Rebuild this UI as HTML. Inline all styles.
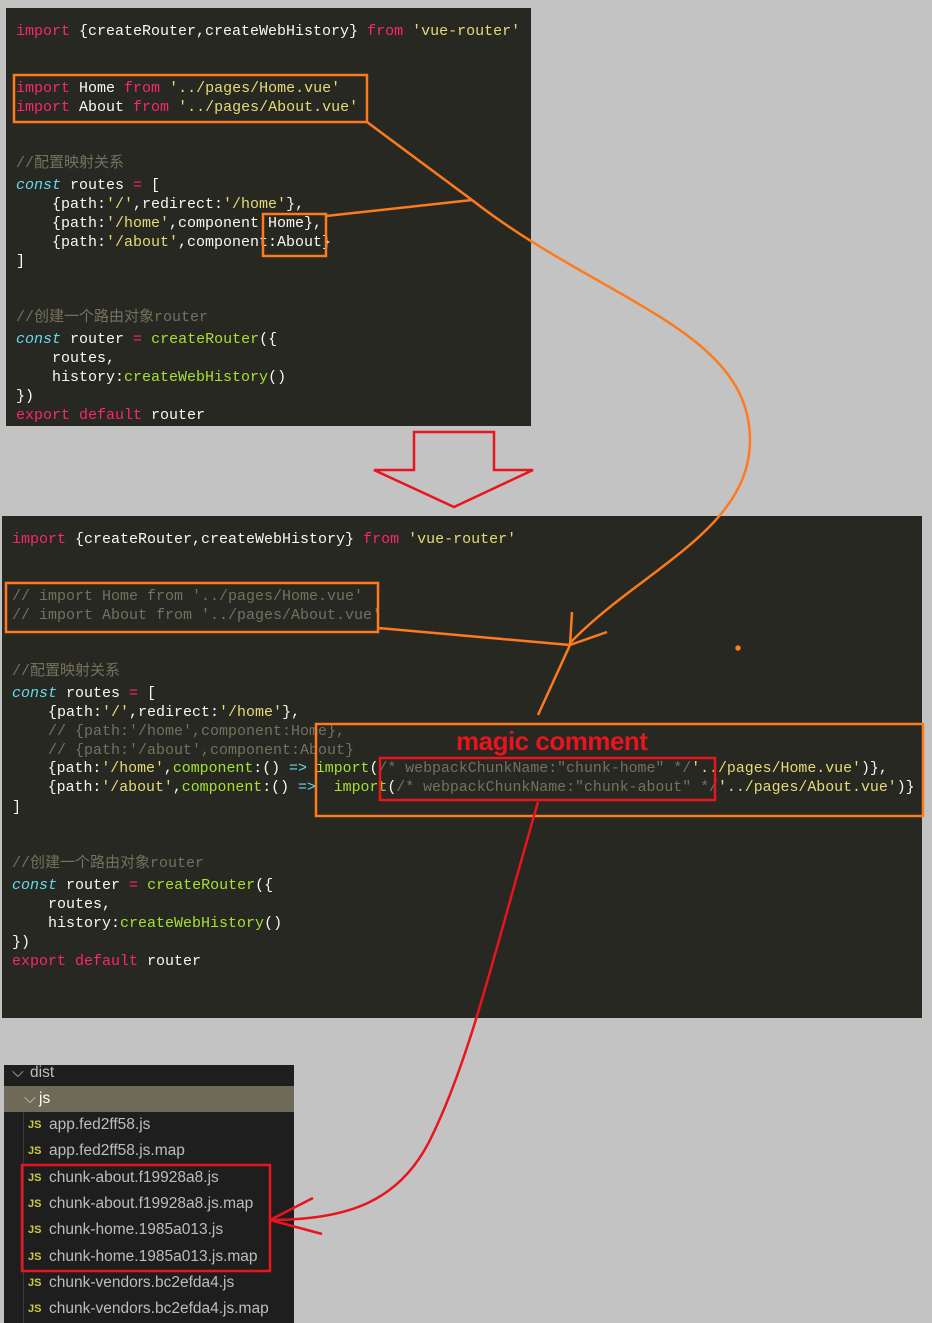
<!DOCTYPE html>
<html><head><meta charset="utf-8"><style>
body{margin:0;width:932px;height:1323px;background:#c3c3c3;position:relative;overflow:hidden;font-family:"Liberation Mono","Noto Sans CJK SC",monospace;}
.p{position:absolute;background:#272822;}
.l{position:absolute;white-space:pre;font-size:15px;line-height:19px;height:19px;color:#f8f8f2;}
.k{color:#f92672}.s{color:#e6db74}.c{color:#75715e}.t{color:#66d9ef;font-style:italic}.f{color:#a6e22e}.b{color:#66d9ef}
.ex{position:absolute;left:4px;top:1065px;width:290px;height:258px;background:#1e1e1e;font-family:"Liberation Sans",sans-serif;color:#bdbdbd;font-size:15.5px;}
.r{position:absolute;left:0;width:290px;height:26px;line-height:26px;}
.js{position:absolute;left:24px;color:#cbcb41;font-weight:bold;font-size:11px;}
.fn{position:absolute;left:45px;}
</style></head><body>
<div class="p" style="left:6px;top:8px;width:525px;height:418px"></div>
<div class="p" style="left:2px;top:516px;width:920px;height:502px"></div>

<div class="l" style="left:16px;top:22px"><span class="k">import</span> {createRouter,createWebHistory} <span class="k">from</span> <span class="s">'vue-router'</span></div>
<div class="l" style="left:16px;top:79px"><span class="k">import</span> Home <span class="k">from</span> <span class="s">'../pages/Home.vue'</span></div>
<div class="l" style="left:16px;top:98px"><span class="k">import</span> About <span class="k">from</span> <span class="s">'../pages/About.vue'</span></div>
<div class="l c" style="left:16px;top:154px">//配置映射关系</div>
<div class="l" style="left:16px;top:176px"><span class="t">const</span> routes <span class="k">=</span> [</div>
<div class="l" style="left:16px;top:195px">    {path:<span class="s">'/'</span>,redirect:<span class="s">'/home'</span>},</div>
<div class="l" style="left:16px;top:214px">    {path:<span class="s">'/home'</span>,component Home},</div>
<div class="l" style="left:16px;top:233px">    {path:<span class="s">'/about'</span>,component:About}</div>
<div class="l" style="left:16px;top:252px">]</div>
<div class="l c" style="left:16px;top:308px">//创建一个路由对象router</div>
<div class="l" style="left:16px;top:330px"><span class="t">const</span> router <span class="k">=</span> <span class="f">createRouter</span>({</div>
<div class="l" style="left:16px;top:349px">    routes,</div>
<div class="l" style="left:16px;top:368px">    history:<span class="f">createWebHistory</span>()</div>
<div class="l" style="left:16px;top:387px">})</div>
<div class="l" style="left:16px;top:406px"><span class="k">export</span> <span class="k">default</span> router</div>

<div class="l" style="left:12px;top:530px"><span class="k">import</span> {createRouter,createWebHistory} <span class="k">from</span> <span class="s">'vue-router'</span></div>
<div class="l c" style="left:12px;top:587px">// import Home from '../pages/Home.vue'</div>
<div class="l c" style="left:12px;top:606px">// import About from '../pages/About.vue'</div>
<div class="l c" style="left:12px;top:662px">//配置映射关系</div>
<div class="l" style="left:12px;top:684px"><span class="t">const</span> routes <span class="k">=</span> [</div>
<div class="l" style="left:12px;top:703px">    {path:<span class="s">'/'</span>,redirect:<span class="s">'/home'</span>},</div>
<div class="l c" style="left:12px;top:722px">    // {path:'/home',component:Home},</div>
<div class="l c" style="left:12px;top:741px">    // {path:'/about',component:About}</div>
<div class="l" style="left:12px;top:760px;font-size:14.9px">    {path:<span class="s">'/home'</span>,<span class="f">component</span>:() <span class="b">=&gt;</span> <span class="f">import</span>(<span class="c">/* webpackChunkName:"chunk-home" */</span><span class="s">'../pages/Home.vue'</span>)},</div>
<div class="l" style="left:12px;top:779px;font-size:14.9px">    {path:<span class="s">'/about'</span>,<span class="f">component</span>:() <span class="b">=&gt;</span>  <span class="f">import</span>(<span class="c">/* webpackChunkName:"chunk-about" */</span><span class="s">'../pages/About.vue'</span>)}</div>
<div class="l" style="left:12px;top:798px">]</div>
<div class="l c" style="left:12px;top:854px">//创建一个路由对象router</div>
<div class="l" style="left:12px;top:876px"><span class="t">const</span> router <span class="k">=</span> <span class="f">createRouter</span>({</div>
<div class="l" style="left:12px;top:895px">    routes,</div>
<div class="l" style="left:12px;top:914px">    history:<span class="f">createWebHistory</span>()</div>
<div class="l" style="left:12px;top:933px">})</div>
<div class="l" style="left:12px;top:952px"><span class="k">export</span> <span class="k">default</span> router</div>

<div style="position:absolute;left:456px;top:726px;color:#e8141e;font:bold 26px 'Liberation Sans',sans-serif;letter-spacing:-0.5px">magic comment</div>

<div class="ex">
<div style="position:absolute;left:19px;top:46px;width:1px;height:212px;background:#3a3a3a"></div>
<div class="r" style="top:-5px"><span style="position:absolute;left:8px">⌵</span><span style="position:absolute;left:26px">dist</span></div>
<div class="r" style="top:21px;background:#6f6a58;color:#fff"><span style="position:absolute;left:20px;color:#ccc">⌵</span><span style="position:absolute;left:35px">js</span></div>
<div class="r" style="top:47px"><span class="js">JS</span><span class="fn">app.fed2ff58.js</span></div>
<div class="r" style="top:73px"><span class="js">JS</span><span class="fn">app.fed2ff58.js.map</span></div>
<div class="r" style="top:100px"><span class="js">JS</span><span class="fn">chunk-about.f19928a8.js</span></div>
<div class="r" style="top:126px"><span class="js">JS</span><span class="fn">chunk-about.f19928a8.js.map</span></div>
<div class="r" style="top:152px"><span class="js">JS</span><span class="fn">chunk-home.1985a013.js</span></div>
<div class="r" style="top:179px"><span class="js">JS</span><span class="fn">chunk-home.1985a013.js.map</span></div>
<div class="r" style="top:205px"><span class="js">JS</span><span class="fn">chunk-vendors.bc2efda4.js</span></div>
<div class="r" style="top:231px"><span class="js">JS</span><span class="fn">chunk-vendors.bc2efda4.js.map</span></div>
</div>

<svg width="932" height="1323" style="position:absolute;left:0;top:0" fill="none">
<g stroke="#fd7a1e" stroke-width="2.5">
<rect x="14" y="75" width="353" height="47"/>
<rect x="263" y="214" width="63" height="42"/>
<rect x="6" y="583" width="372" height="49"/>
<rect x="316" y="724" width="607" height="92"/>
<path d="M326 216 L472 200"/>
<path d="M367 122 L472 200 C600 300 750 330 750 440 C750 530 640 570 570 643"/>
<path d="M378 628 L570 645 L538 715"/>
<path d="M570 645 L572 612 M570 645 L607 632"/>
<circle cx="738" cy="648" r="1.5" fill="#fd7a1e"/>
</g>
<g stroke="#e8141e" stroke-width="2.5">
<rect x="380" y="758" width="335" height="42"/>
<rect x="22" y="1165" width="248" height="106"/>
<path d="M538 802 C495 950 470 1060 430 1140 C400 1200 350 1220 270 1220"/>
<path d="M270 1220 L313 1198 M270 1220 L322 1234"/>
<path d="M414 432 H494 V470 H533 L454 507 L374 470 H414 Z"/>
</g>
</svg>
</body></html>
